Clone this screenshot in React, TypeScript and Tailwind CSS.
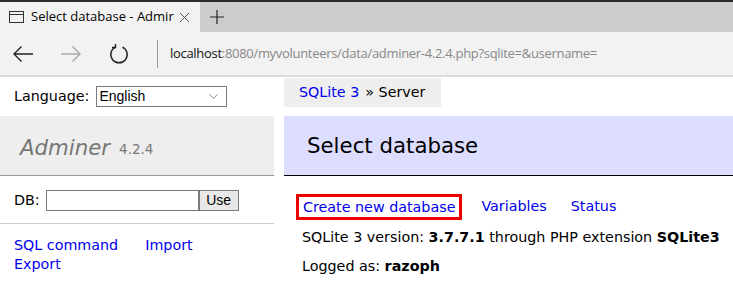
import { ChevronDown } from "lucide-react";

const Verdana = "font-['DejaVu_Sans',Verdana,sans-serif]";

const BackIcon = ({ color }: { color: string }) => (
  <svg width="22" height="18" viewBox="0 0 22 18" fill="none" stroke={color} strokeWidth="1.4">
    <path d="M21 9H2M9.5 1.5L2 9l7.5 7.5" />
  </svg>
);

const ForwardIcon = ({ color }: { color: string }) => (
  <svg width="22" height="18" viewBox="0 0 22 18" fill="none" stroke={color} strokeWidth="1.4">
    <path d="M1 9h19M12.5 1.5L20 9l-7.5 7.5" />
  </svg>
);

const RefreshIcon = () => (
  <svg width="20" height="22" viewBox="0 0 20 22" fill="none" stroke="#222" strokeWidth="1.4">
    <path d="M6.5 4.2A8.2 8.2 0 1 0 13.5 4.2" />
    <path d="M6.5 1v3.5H3" />
  </svg>
);

function BrowserChrome() {
  return (
    <div className="font-['Open_Sans','Noto_Sans',sans-serif]">
      <div className="h-[2px] bg-[#2b2b2b]" />
      <div className="flex h-[30px] bg-[#cccccc]">
        <div className="flex w-[200px] items-center bg-[#f2f2f2] pl-[9px] pr-[10px]">
          <svg width="15" height="12" viewBox="0 0 15 12" fill="none" stroke="#333" strokeWidth="1">
            <rect x="0.5" y="0.5" width="14" height="11" />
            <path d="M0.5 3.5h14" />
          </svg>
          <span className="ml-[7px] flex-1 overflow-hidden whitespace-nowrap text-[13px] text-black">
            Select database - Admir
          </span>
          <svg width="11" height="11" viewBox="0 0 11 11" stroke="#555" strokeWidth="1">
            <path d="M1 1l9 9M10 1l-9 9" />
          </svg>
        </div>
        <div className="flex w-[33px] items-center justify-center">
          <svg width="14" height="14" viewBox="0 0 14 14" stroke="#222" strokeWidth="1.2">
            <path d="M7 0v14M0 7h14" />
          </svg>
        </div>
      </div>
      <div className="flex h-[43px] items-center bg-[#f2f2f2]">
        <div className="ml-[12px] flex w-[22px] justify-center">
          <BackIcon color="#222" />
        </div>
        <div className="ml-[26px] flex w-[22px] justify-center">
          <ForwardIcon color="#aaa" />
        </div>
        <div className="ml-[26px] flex w-[22px] justify-center">
          <RefreshIcon />
        </div>
        <div className="ml-[27px] h-[28px] w-px bg-[#999]" />
        <div className="ml-[12px] text-[13px] tracking-[-0.3px]">
          <span className="text-[#111]">localhost</span>
          <span className="text-[#888]">:8080/myvolunteers/data/adminer-4.2.4.php?sqlite=&username=</span>
        </div>
      </div>
    </div>
  );
}

function Sidebar() {
  return (
    <div className="w-[274px] shrink-0 text-[14.3px]">
      <div className="flex h-[39px] items-center pl-[14px]">
        <span className="text-black">Language:</span>
        <div className="ml-[7px] flex h-[21px] w-[131px] items-center justify-between border border-[#7a7a7a] bg-white pl-[2px] pr-[5px] font-['Liberation_Sans',Arial,sans-serif] text-[14px] leading-none">
          <span className="-mt-[2px]">English</span>
          <ChevronDown size={15} strokeWidth={1} color="#444" />
        </div>
      </div>
      <div className="flex h-[60px] items-center border-b border-[#999] bg-[#eeeeee] pl-[20px] pt-[4px] text-[#777]">
        <span className="text-[21.3px] italic">Adminer</span>
        <span className="ml-[9px] mt-[3px] text-[13.5px]">4.2.4</span>
      </div>
      <div className="flex h-[47px] items-start pl-[14px] pt-[14px]">
        <span className="mr-[6px] leading-[21px]">DB:</span>
        <div className="h-[21px] w-[153px] border border-[#7a7a7a] bg-white" />
        <div className="flex h-[21px] w-[40px] items-center justify-center border border-[#7a7a7a] bg-[#e8e8e8] font-['Liberation_Sans',Arial,sans-serif] text-[14px]">
          Use
        </div>
      </div>
      <div className="h-px bg-[#cccccc]" />
      <div className="pl-[14px] pt-[12px] leading-[19px] text-[#0000ee]">
        <div className="flex">
          <span>SQL command</span>
          <span className="ml-[27px]">Import</span>
        </div>
        <div>Export</div>
      </div>
    </div>
  );
}

function Content() {
  return (
    <div className="flex-1 pl-[10px] text-[14.3px]">
      <div className="flex h-[39px] items-start pt-[1px]">
        <div className="flex h-[29px] items-center bg-[#eeeeee] pl-[15px] pr-[15px]">
          <span className="text-[#0000ee]">SQLite 3</span>
          <span className="ml-[6px]">» Server</span>
        </div>
      </div>
      <div className="flex h-[60px] items-center border-b border-black bg-[#ddddff] pl-[23px]">
        <span className="text-[21.3px] text-black">Select database</span>
      </div>
      <div className="mt-[18px] flex items-center pl-[12px]">
        <div className="h-[26px] border-[3px] border-[#ee0000] px-[4px] leading-[20px] text-[#0000ee]">
          Create new database
        </div>
        <span className="ml-[19px] text-[#0000ee]">Variables</span>
        <span className="ml-[24px] text-[#0000ee]">Status</span>
      </div>
      <div className="mt-[8px] pl-[18px] leading-[18px] whitespace-nowrap">
        SQLite 3 version: <b>3.7.7.1</b> through PHP extension <b>SQLite3</b>
      </div>
      <div className="mt-[11px] pl-[18px] leading-[18px]">
        Logged as: <b>razoph</b>
      </div>
    </div>
  );
}

export default function App() {
  return (
    <div className={`h-[281px] w-[733px] overflow-hidden bg-white ${Verdana}`}>
      <BrowserChrome />
      <div className="h-[2px] bg-[#dcdcdc]" />
      <div className="flex">
        <Sidebar />
        <Content />
      </div>
    </div>
  );
}
